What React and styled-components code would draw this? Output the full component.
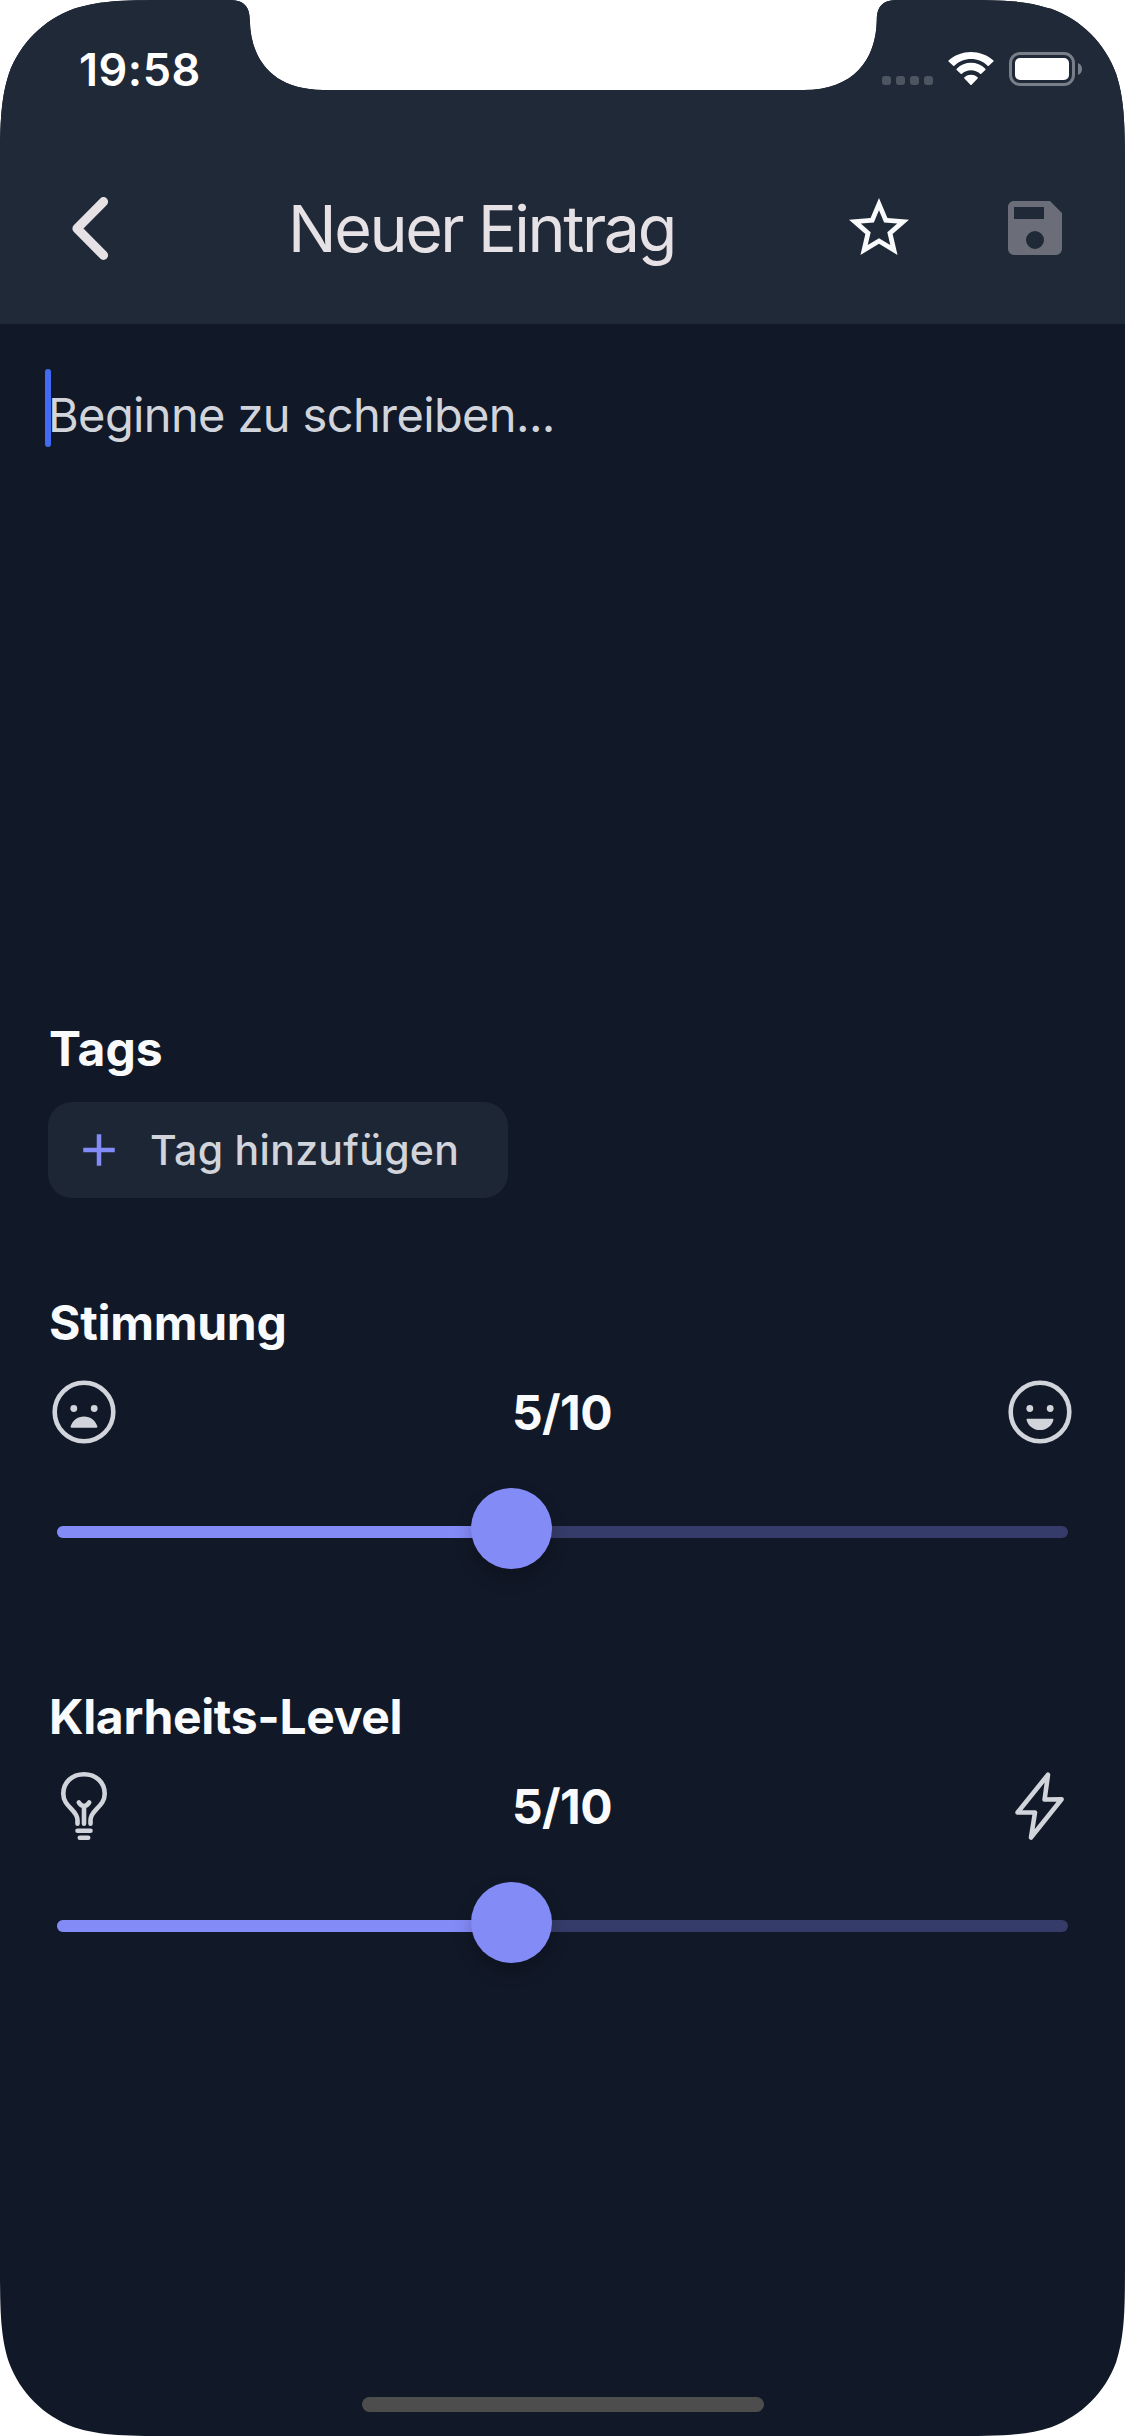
import React from "react";
import styled, { createGlobalStyle } from "styled-components";

const color = {
  bar: "#202937",
  page: "#111827",
  text: "#f9fafb",
  title: "#e6e1e5",
  muted: "#d1d4db",
  accent: "#838bf7",
  rail: "#353c69",
  chip: "#1d2634",
  disabled: "#6b6e79",
  caret: "#436af5",
};

const GlobalStyle = createGlobalStyle`
  * { box-sizing: border-box; }
  body {
    margin: 0;
    background: #fff;
    font-family: Inter, "Liberation Sans", sans-serif;
  }
`;

/* Outline of the display: continuous corners plus the sensor housing */
const SCREEN_OUTLINE =
  "M179 0 L228 0 C243 0 249.5 5 249.8 20 C250.5 60 273 90 323 90 " +
  "L803.6 90 C853.6 90 876.1 60 876.8 20 C877.1 5 883.6 0 898.6 0 L946 0 " +
  "C997.6 0 1023.4 0 1046.6 7.7 L1051.1 8.8 C1081.4 19.8 1105.2 43.6 1116.2 73.9 " +
  "C1125 101.6 1125 127.4 1125 179 L1125 2257 " +
  "C1125 2308.6 1125 2334.4 1116.2 2362.1 C1105.2 2392.4 1081.4 2416.2 1051.1 2427.2 " +
  "C1023.4 2436 997.6 2436 946 2436 L179 2436 " +
  "C127.4 2436 101.6 2436 73.9 2427.2 C43.6 2416.2 19.8 2392.4 8.8 2362.1 " +
  "C0 2334.4 0 2308.6 0 2257 L0 179 " +
  "C0 127.4 0 101.6 8.8 73.9 C19.8 43.6 43.6 19.8 73.9 8.8 C101.6 0 127.4 0 179 0 Z";

const Screen = styled.main`
  display: flex;
  flex-direction: column;
  width: 1125px;
  height: 2436px;
  background: ${color.page};
  clip-path: path("${SCREEN_OUTLINE}");
`;

const TopArea = styled.header`
  flex: none;
  height: 324px;
  background: ${color.bar};
`;

const StatusBar = styled.div`
  display: flex;
  justify-content: space-between;
  height: 132px;
  padding: 41px 41px 0 79px;
`;

const Clock = styled.time`
  padding-top: 1px;
  font-size: 45px;
  line-height: 56px;
  font-weight: 600;
  letter-spacing: 0.5px;
  color: #fff;
`;

const StatusIcons = styled.div`
  display: flex;
  align-items: flex-start;
  padding-top: 11px;
`;

const SignalDots = styled.div`
  display: flex;
  gap: 5px;
  margin: 24px 15px 0 0;
`;

const SignalDot = styled.span`
  width: 9px;
  height: 9px;
  border-radius: 3px;
  background: #4d5561;
`;

const WifiSlot = styled.span`
  display: flex;
  margin-right: 14px;
`;

const AppBar = styled.div`
  display: flex;
  align-items: center;
  height: 192px;
  padding: 0 54px;
`;

const IconButton = styled.button`
  display: flex;
  flex: none;
  padding: 0;
  border: 0;
  background: none;
  color: ${(p) => p.$color};
  margin-left: ${(p) => p.$gap || 0}px;
`;

const Title = styled.h1`
  flex: 1;
  margin: 2px 0 0;
  padding-left: 162px;
  font-size: 64.5px;
  line-height: 84px;
  font-weight: 400;
  letter-spacing: -2.4px;
  white-space: nowrap;
  color: ${color.title};
`;

const Content = styled.div`
  display: flex;
  flex: 1;
  flex-direction: column;
  padding: 45px 48px 0;
`;

const Editor = styled.div`
  display: flex;
  height: 650px;
  margin-left: -3px;
`;

const Caret = styled.span`
  width: 6px;
  height: 78px;
  border-radius: 3px;
  background: ${color.caret};
`;

const Placeholder = styled.p`
  margin: 16px 0 0 -3px;
  font-size: 47px;
  line-height: 60px;
  letter-spacing: -0.63px;
  color: ${color.muted};
`;

const Section = styled.section`
  display: flex;
  flex-direction: column;
  margin-bottom: ${(p) => p.$after}px;
`;

const Heading = styled.h2`
  margin: 0;
  padding: ${(p) => p.$drop || 0}px 0 0 1px;
  height: 60px;
  font-size: 48px;
  line-height: 60px;
  font-weight: 700;
  letter-spacing: ${(p) => p.$tracking || 0}px;
  color: ${color.text};
`;

const AddTag = styled.button`
  display: flex;
  align-items: center;
  align-self: flex-start;
  width: 460px;
  height: 96px;
  margin-top: 23px;
  padding: 0 0 0 24px;
  gap: 24px;
  border: 0;
  border-radius: 24px;
  background: ${color.chip};
  color: ${color.accent};
`;

const AddTagText = styled.span`
  font-family: Inter, "Liberation Sans", sans-serif;
  font-size: 41px;
  line-height: 54px;
  font-weight: 500;
  letter-spacing: 0.3px;
  white-space: nowrap;
  color: ${color.muted};
`;

const ScaleRow = styled.div`
  display: flex;
  align-items: center;
  justify-content: space-between;
  height: 72px;
  margin-top: 24px;
  padding-right: 1px;
  color: ${color.muted};
`;

const Score = styled.output`
  padding-top: 1px;
  font-size: 48px;
  line-height: 60px;
  font-weight: 700;
  letter-spacing: -0.6px;
  color: ${color.text};
`;

const Slider = styled.div`
  display: flex;
  align-items: center;
  height: 81px;
  margin: 40px 9px 0;
`;

const Rail = styled.div`
  position: relative;
  top: 3.5px;
  flex: 1;
  height: 12px;
  border-radius: 6px;
  background: ${color.rail};
`;

const RailFill = styled.div`
  height: 12px;
  border-radius: 6px 0 0 6px;
  background: ${color.accent};
`;

const Thumb = styled.div`
  position: absolute;
  top: -38px;
  width: 81px;
  height: 81px;
  margin-left: -40.5px;
  border-radius: 50%;
  background: ${color.accent};
  box-shadow: 0 9px 18px rgba(0, 0, 0, 0.22);
`;

const HomeIndicator = styled.div`
  flex: none;
  align-self: center;
  width: 402px;
  height: 15px;
  margin: 0 0 24px 1px;
  border-radius: 7.5px;
  background: #4d4d4d;
`;

const WifiIcon = () => (
  <svg width="47" height="34" viewBox="0 0 47 34" fill="#fff">
    <path d="M23 7.100c6.400 0 12.200 2.400 16.600 6.700.4.300.9.300 1.200 0l4.600-4.200c.4-.4.400-.6 0-1C32.800-2.800 13.200-2.800.6 8.600c-.4.4-.4.600 0 1l4.600 4.200c.3.3.8.3 1.200 0 4.400-4.300 10.200-6.700 16.600-6.700z" />
    <path d="M23 18.200c3.500 0 6.600 1.300 9.100 3.500.4.300.8.300 1.200 0l4-3.700c.4-.4.400-.9 0-1.300-7.900-7.800-20.700-7.800-28.600 0-.4.4-.4.900 0 1.300l4 3.700c.4.3.8.300 1.200 0 2.500-2.200 5.600-3.500 9.100-3.500z" />
    <path d="M29.600 26.600c.4-.4.400-.9 0-1.300-3.800-3.300-9.400-3.300-13.200 0-.4.4-.4.900 0 1.300l6 6.200c.3.400.9.400 1.200 0z" />
  </svg>
);

const BatteryIcon = () => (
  <svg width="75" height="34" viewBox="0 0 75 34">
    <rect x="1.500" y="1.500" width="63" height="31" rx="9.500" fill="none" stroke="#797f88" strokeWidth="3" />
    <rect x="6" y="6" width="54" height="22" rx="5" fill="#fff" />
    <path d="M69 11v12c2.500-1 4-3.300 4-6s-1.500-5-4-6z" fill="#797f88" />
  </svg>
);

const BackIcon = () => (
  <svg width="72" height="72" viewBox="0 0 72 72" fill="none" stroke="currentColor" strokeWidth="9.200" strokeLinecap="round" strokeLinejoin="round">
    <path d="M49.500 9.700 23 36.500 49.500 63.300" />
  </svg>
);

const GlyphIcon = ({ size, d }) => (
  <svg width={size} height={size} viewBox="0 0 24 24" fill="currentColor">
    <path d={d} />
  </svg>
);

const STAR =
  "M12,15.39L8.24,17.66L9.23,13.38L5.91,10.5L10.29,10.13L12,6.09L13.71,10.13L18.09,10.5L14.77,13.38L15.76,17.66M22,9.24L14.81,8.63L12,2L9.19,8.63L2,9.24L7.45,13.97L5.82,21L12,17.27L18.18,21L16.54,13.97L22,9.24Z";
const SAVE =
  "M15,9H5V5H15M12,19A3,3 0 0,1 9,16A3,3 0 0,1 12,13A3,3 0 0,1 15,16A3,3 0 0,1 12,19M17,3H5C3.89,3 3,3.9 3,5V19A2,2 0 0,0 5,21H19A2,2 0 0,0 21,19V7L17,3Z";
const PLUS = "M19,13H13V19H11V13H5V11H11V5H13V11H19V13Z";

const FaceIcon = ({ happy }) => (
  <svg width="72" height="72" viewBox="0 0 72 72" fill="currentColor">
    <circle cx="36" cy="36" r="29.300" fill="none" stroke="currentColor" strokeWidth="4.600" />
    <circle cx="25.800" cy="32.500" r="3.400" />
    <circle cx="46.200" cy="32.500" r="3.400" />
    {happy ? (
      <path d="M23.500 42.700h25c.7 0 1.100.5.900 1.200C47.700 50 42.400 54 36 54s-11.700-4-13.400-10.100c-.2-.7.200-1.200.9-1.200z" />
    ) : (
      <path d="M23.500 51.700h25c.7 0 1.100-.5.900-1.200C47.700 44.400 42.400 40.400 36 40.400s-11.700 4-13.400 10.100c-.2.7.2 1.200.9 1.200z" />
    )}
  </svg>
);

const BulbIcon = () => (
  <svg width="72" height="72" viewBox="0 0 72 72" fill="none" stroke="currentColor" strokeWidth="4.600" strokeLinecap="round" strokeLinejoin="round">
    <path d="M29.500 53.700V50c0-10.500-14.200-13-14.200-26.300C15.300 12.300 24 4.300 36 4.300s20.700 8 20.700 19.400C56.700 37 42.500 39.500 42.500 50v3.700" />
    <path d="M36 53.700V36M30.800 32.500c1.500 2.300 3.400 3.500 5.200 3.500s3.700-1.200 5.200-3.500" />
    <path d="M29.500 60.800h13M31.800 67.700h8.400" />
  </svg>
);

const BoltIcon = () => (
  <svg width="72" height="72" viewBox="0 0 72 72" fill="none" stroke="currentColor" strokeWidth="4.600" strokeLinecap="round" strokeLinejoin="round">
    <path d="M44 4.700 40.600 29.500 57.600 29.300 27 67.500 31 42.500 13.500 42.500Z" />
  </svg>
);

const Rating = ({ label, low, high, tracking, after }) => (
  <Section $after={after}>
    <Heading $tracking={tracking} $drop={1}>{label}</Heading>
    <ScaleRow>
      {low}
      <Score>5/10</Score>
      {high}
    </ScaleRow>
    <Slider>
      <Rail>
        <RailFill style={{ width: `${(4 / 9) * 100 + 0.5}%` }} />
        <Thumb style={{ left: `${(4 / 9) * 100 + 0.5}%` }} />
      </Rail>
    </Slider>
  </Section>
);

export default function App() {
  return (
    <>
      <GlobalStyle />
      <Screen>
        <TopArea>
          <StatusBar>
            <Clock>19:58</Clock>
            <StatusIcons>
              <SignalDots>
                <SignalDot />
                <SignalDot />
                <SignalDot />
                <SignalDot />
              </SignalDots>
              <WifiSlot>
                <WifiIcon />
              </WifiSlot>
              <BatteryIcon />
            </StatusIcons>
          </StatusBar>
          <AppBar>
            <IconButton $color={color.title} aria-label="Zurück">
              <BackIcon />
            </IconButton>
            <Title>Neuer Eintrag</Title>
            <IconButton $color={color.text} aria-label="Favorit">
              <GlyphIcon size={72} d={STAR} />
            </IconButton>
            <IconButton $color={color.disabled} $gap={84} aria-label="Speichern">
              <GlyphIcon size={72} d={SAVE} />
            </IconButton>
          </AppBar>
        </TopArea>
        <Content>
          <Editor>
            <Caret />
            <Placeholder>Beginne zu schreiben...</Placeholder>
          </Editor>
          <Section $after={94}>
            <Heading>Tags</Heading>
            <AddTag>
              <GlyphIcon size={54} d={PLUS} />
              <AddTagText>Tag hinzufügen</AddTagText>
            </AddTag>
          </Section>
          <Rating label="Stimmung" low={<FaceIcon />} high={<FaceIcon happy />} tracking={-0.28} after={117} />
          <Rating label="Klarheits-Level" low={<BulbIcon />} high={<BoltIcon />} tracking={-0.33} after={0} />
        </Content>
        <HomeIndicator />
      </Screen>
    </>
  );
}
